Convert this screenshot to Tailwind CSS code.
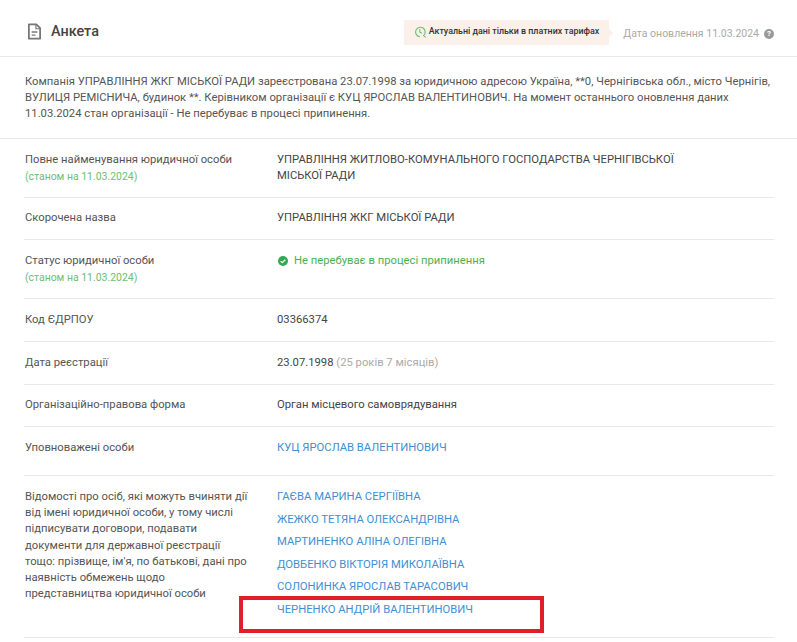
<!DOCTYPE html>
<html lang="uk">
<head>
    <meta charset="UTF-8">
    <title>Анкета</title>
    <script src="https://cdn.jsdelivr.net/npm/@tailwindcss/browser@4"></script>
</head>
<body class="bg-white font-['Roboto',sans-serif] text-[11.25px] text-[#555]">
    <div class="w-[797px] h-[642px] overflow-hidden relative">
        <!-- header -->
        <div class="h-[57px] border-b border-[#e8e8e8] flex items-center pl-[27px] pr-[23px] pt-[11px]">
            <svg class="w-[15px] h-[17px] mr-[9px] mb-[4px]" viewBox="0 0 16 18" fill="none" stroke="#777" stroke-width="1.9">
                <path d="M2 1.5h8l4 4v11H2z" stroke-linejoin="round"/>
                <path d="M9.5 1.5v4.5H14" stroke-width="1.2"/>
                <path d="M5 9.5h6M5 12.8h4" stroke-width="1.4"/>
            </svg>
            <span class="text-[14.4px] font-medium text-[#444] mb-[4px]">Анкета</span>
            <div class="ml-auto flex items-center h-[25px] bg-[#fbf1ea] pl-[10px] pr-[10px] mb-[3px] relative">
                <svg class="w-[12px] h-[12px] mr-[3px]" viewBox="0 0 12 12" fill="none" stroke="#6cc070" stroke-width="1.1">
                    <path d="M11.6 11.2L9.6 9.6A4.8 4.8 0 1 0 6 10.8"/>
                    <path d="M5.8 3.2v3l2 1"/>
                </svg>
                <span class="text-[8.9px] font-medium text-[#333]">Актуальні дані тільки в платних тарифах</span>
                <div class="absolute right-[-3px] top-[10px] w-[6px] h-[6px] rotate-45 bg-[#fbf1ea]"></div>
            </div>
            <span class="ml-[14px] text-[#aaa] text-[10.5px]">Дата оновлення 11.03.2024</span>
            <span class="ml-[5px] w-[10px] h-[10px] rounded-full bg-[#999] text-white text-[8px] font-bold flex items-center justify-center">?</span>
        </div>
        <!-- summary -->
        <div class="h-[82px] border-b border-[#e8e8e8] pl-[25px] pr-[20px] pt-[17px] leading-[16px]">
            Компанія УПРАВЛІННЯ ЖКГ МІСЬКОЇ РАДИ зареєстрована 23.07.1998 за юридичною адресою Україна, **0, Чернігівська обл., місто Чернігів, ВУЛИЦЯ РЕМІСНИЧА, будинок **. Керівником організації є КУЦ ЯРОСЛАВ ВАЛЕНТИНОВИЧ. На момент останнього оновлення даних 11.03.2024 стан організації - Не перебуває в процесі припинення.
        </div>
        <!-- rows -->
        <div class="mx-[24px] w-[750px]">
            <div class="flex h-[59px] border-b border-[#e8e8e8] pt-[13px] leading-[16px]">
                <div class="w-[253px] pl-px">
                    <div>Повне найменування юридичної особи</div>
                    <div class="text-[10.45px] text-[#6cc070] mt-px">(станом на 11.03.2024)</div>
                </div>
                <div class="w-[410px] text-[#444]">УПРАВЛІННЯ ЖИТЛОВО-КОМУНАЛЬНОГО ГОСПОДАРСТВА ЧЕРНІГІВСЬКОЇ МІСЬКОЇ РАДИ</div>
            </div>
            <div class="flex items-center h-[42px] border-b border-[#e8e8e8]">
                <div class="w-[253px] pl-px">Скорочена назва</div>
                <div class="text-[#444]">УПРАВЛІННЯ ЖКГ МІСЬКОЇ РАДИ</div>
            </div>
            <div class="flex h-[59px] border-b border-[#e8e8e8] pt-[13px] leading-[16px]">
                <div class="w-[253px] pl-px">
                    <div>Статус юридичної особи</div>
                    <div class="text-[10.45px] text-[#6cc070] mt-px">(станом на 11.03.2024)</div>
                </div>
                <div class="flex items-start text-[#4caf50]">
                    <svg class="w-[10px] h-[10px] mt-[3px] mr-[6px] ml-px" viewBox="0 0 10 10">
                        <circle cx="5" cy="5" r="5" fill="#34a853"/>
                        <path d="M2.7 5.1l1.6 1.6 3-3" fill="none" stroke="#fff" stroke-width="1.3"/>
                    </svg>
                    <span>Не перебуває в процесі припинення</span>
                </div>
            </div>
            <div class="flex items-center h-[43px] border-b border-[#e8e8e8]">
                <div class="w-[253px] pl-px">Код ЄДРПОУ</div>
                <div class="text-[#444]">03366374</div>
            </div>
            <div class="flex items-center h-[43px] border-b border-[#e8e8e8]">
                <div class="w-[253px] pl-px">Дата реєстрації</div>
                <div class="text-[#444]">23.07.1998 <span class="text-[#aaa]">(25 років 7 місяців)</span></div>
            </div>
            <div class="flex items-center h-[42px] border-b border-[#e8e8e8]">
                <div class="w-[253px] pl-px">Організаційно-правова форма</div>
                <div class="text-[#444]">Орган місцевого самоврядування</div>
            </div>
            <div class="flex items-center h-[49px] border-b border-[#e8e8e8] pb-[6px]">
                <div class="w-[253px] pl-px">Уповноважені особи</div>
                <div class="text-[#3f8fd2]">КУЦ ЯРОСЛАВ ВАЛЕНТИНОВИЧ</div>
            </div>
            <div class="flex h-[162px] border-b border-[#e8e8e8] pt-[13px]">
                <div class="w-[253px] pl-px pr-[27px] leading-[16.2px]">Відомості про осіб, які можуть вчиняти дії від імені юридичної особи, у тому числі підписувати договори, подавати документи для державної реєстрації тощо: прізвище, ім'я, по батькові, дані про наявність обмежень щодо представництва юридичної особи</div>
                <div class="flex flex-col gap-[6.5px] text-[#3f8fd2] leading-[16px]">
                    <div>ГАЄВА МАРИНА СЕРГІЇВНА</div>
                    <div>ЖЕЖКО ТЕТЯНА ОЛЕКСАНДРІВНА</div>
                    <div>МАРТИНЕНКО АЛІНА ОЛЕГІВНА</div>
                    <div>ДОВБЕНКО ВІКТОРІЯ МИКОЛАЇВНА</div>
                    <div>СОЛОНИНКА ЯРОСЛАВ ТАРАСОВИЧ</div>
                    <div>ЧЕРНЕНКО АНДРІЙ ВАЛЕНТИНОВИЧ</div>
                </div>
            </div>
        </div>
        <!-- red highlight over the last name -->
        <div class="absolute left-[239px] top-[596px] w-[305px] h-[37px] border-[4px] border-[#e01f2d]"></div>
    </div>
</body>
</html>
